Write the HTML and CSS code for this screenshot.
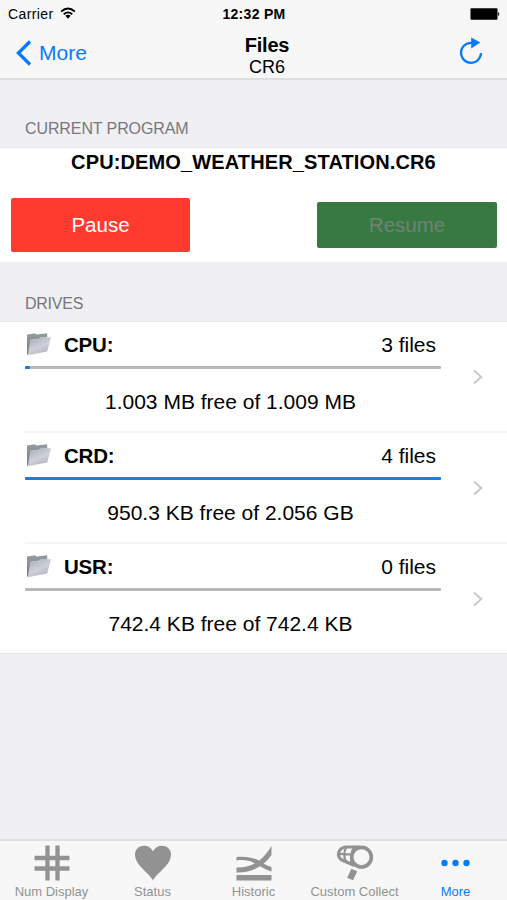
FILE: index.html
```html
<!DOCTYPE html>
<html lang="en">
<head>
<meta charset="utf-8">
<title>Files</title>
<link rel="stylesheet" href="styles.css">
</head>
<body>
<svg width="0" height="0" class="defs" aria-hidden="true">
  <defs>
    <linearGradient id="front" x1="0" y1="0" x2=".6" y2="1"><stop offset="0" stop-color="#a4a9ae"/><stop offset=".6" stop-color="#cdd0d9"/><stop offset="1" stop-color="#b4b7be"/></linearGradient>
    <linearGradient id="back" x1="0" y1="0" x2="0" y2="1"><stop offset="0" stop-color="#979d9e"/><stop offset="1" stop-color="#747a7e"/></linearGradient>
    <symbol id="folder" viewBox="0 0 26 24">
      <path d="M1 2.500 9 1.200l1.200 1.200 11-1.200V7L3 22.500H1z" fill="url(#back)"/>
      <path d="M4.300 8 13 7l1.300-1.300L25 5.200 21.200 19.500 1.800 23.200z" fill="url(#front)"/>
      <path d="M4.300 8 13 7l1.300-1.300L25 5.200" fill="none" stroke="#d2d6da" stroke-width=".6"/>
    </symbol>
    <symbol id="chevron" viewBox="0 0 10 16"><path d="m1 1.500 7.200 6.500L1 14.500" fill="none" stroke="#c7c7cc" stroke-width="2"/></symbol>
  </defs>
</svg>
<div class="app">
  <header>
    <div class="status">
      <div class="carrier"><span>Carrier</span>
        <svg width="16" height="13" viewBox="0 0 16 13"><g fill="none" stroke="#000" stroke-width="1.800"><path d="M1.200 4.500Q8-1.500 14.800 4.500"/><path d="M3.700 7.200Q8 3.500 12.300 7.200"/></g><path d="M5.300 8.800Q8 6.800 10.700 8.800L8 11.700z"/></svg>
      </div>
      <div class="clock">12:32 PM</div>
      <svg class="battery" width="30" height="12" viewBox="0 0 30 12"><rect x=".5" y=".3" width="27" height="11.400" rx="1"/><path d="M28.200 4c1.400.4 1.400 3.600 0 4z"/></svg>
    </div>
    <div class="nav">
      <div class="back"><svg width="16" height="26" viewBox="0 0 16 26"><path d="M14 1.500 2.400 13 14 24.500" fill="none" stroke="#077aff" stroke-width="3.300"/></svg><span>More</span></div>
      <div class="title"><h1>Files</h1><p>CR6</p></div>
      <svg class="refresh" width="24" height="28" viewBox="0 0 24 28"><path d="M13 5.800h-1.200A10 10 0 1 0 22 16" fill="none" stroke="#077aff" stroke-width="2.200"/><path d="M12.200.500 21.300 5.500 12.200 11.500z" fill="#077aff"/></svg>
    </div>
  </header>
  <main>
    <h2 class="section first">CURRENT PROGRAM</h2>
    <section class="program">
      <h3>CPU:DEMO_WEATHER_STATION.CR6</h3>
      <div class="buttons"><button class="pause">Pause</button><button class="resume" disabled>Resume</button></div>
    </section>
    <h2 class="section">DRIVES</h2>
    <section class="drives">
      <article class="drive">
        <div class="info">
          <div class="head"><svg class="folder" width="26" height="24"><use href="#folder"/></svg><strong>CPU:</strong><span class="count">3 files</span></div>
          <div class="bar"><div class="used" style="width:1.2%"></div></div>
          <p class="free">1.003 MB free of 1.009 MB</p>
        </div>
        <svg width="10" height="16"><use href="#chevron"/></svg>
      </article>
      <article class="drive">
        <div class="info">
          <div class="head"><svg class="folder" width="26" height="24"><use href="#folder"/></svg><strong>CRD:</strong><span class="count">4 files</span></div>
          <div class="bar"><div class="used" style="width:100%"></div></div>
          <p class="free">950.3 KB free of 2.056 GB</p>
        </div>
        <svg width="10" height="16"><use href="#chevron"/></svg>
      </article>
      <article class="drive">
        <div class="info">
          <div class="head"><svg class="folder" width="26" height="24"><use href="#folder"/></svg><strong>USR:</strong><span class="count">0 files</span></div>
          <div class="bar"><div class="used" style="width:0%"></div></div>
          <p class="free">742.4 KB free of 742.4 KB</p>
        </div>
        <svg width="10" height="16"><use href="#chevron"/></svg>
      </article>
    </section>
  </main>
  <nav class="tabs">
    <div class="tab"><svg width="38" height="38" viewBox="0 0 38 38"><path d="M14.500 1.500v35M24.500 1.500v35M1.500 14h35M1.500 24.500h35" fill="none" stroke="#929292" stroke-width="4.300"/></svg><span>Num Display</span></div>
    <div class="tab"><svg width="38" height="38" viewBox="0 0 38 38"><path d="M19 36.500C15.500 29 1 21.500 1 10.500 1 .500 15-1.500 19 7.500 23-1.500 37 .500 37 10.500 37 21.500 22.500 29 19 36.500z" fill="#929292"/></svg><span>Status</span></div>
    <div class="tab"><svg width="38" height="38" viewBox="0 0 38 38"><g fill="#929292"><path d="M1.500 31h35v5.500h-35z"/><path d="M1.500 23.500C18 24 28 16 36.500 2v9C29 22 17 29 1.500 28.500z"/><path d="M1.500 13C14 12 22 15 27 18.500c4 2.500 7 3.800 9.500 4.500v4.500C30 25.500 24 21.500 19 19 13 16 8 15.500 1.500 16.500z"/></g></svg><span>Historic</span></div>
    <div class="tab"><svg width="38" height="38" viewBox="0 0 38 38"><g fill="none" stroke="#929292"><circle cx="25.500" cy="13.200" r="9.800" stroke-width="3.600"/><path d="M24 3 9.500 3C1.500 4.500.800 12.500 5.500 15.800L18.500 21.500" stroke-width="3.200"/><path d="M2.500 9.800 15.500 10.500M10.500 3C7.500 8 7.800 13.500 10 17.500" stroke-width="2.200"/><path d="M17.500 4c-3 5-3.300 10-1.500 16" stroke-width="2"/><path d="m18.300 26-4.200 9" stroke-width="6.500"/></g></svg><span>Custom Collect</span></div>
    <div class="tab active"><svg width="38" height="38" viewBox="0 0 38 38"><g fill="#077aff"><circle cx="7.500" cy="19" r="3.200"/><circle cx="18.500" cy="19" r="3.200"/><circle cx="29.500" cy="19" r="3.200"/></g></svg><span>More</span></div>
  </nav>
</div>
</body>
</html>
```
FILE: styles.css
```css
* { box-sizing: border-box; margin: 0; padding: 0; }
body { font-family: "Liberation Sans", Arial, sans-serif; background: #efeff4; color: #000; }
svg { display: block; flex: none; }
.defs { position: absolute; }
.app { height: 900px; display: flex; flex-direction: column; }
header { height: 80px; background: #f7f7f7; border-bottom: 2px solid #dededf; }
.status { height: 28px; display: grid; grid-template-columns: 1fr auto 1fr; align-items: center; padding: 0 7px 0 8px; font-size: 14px; }
.carrier { display: flex; align-items: center; gap: 6px; letter-spacing: .4px; }
.carrier svg { margin-top: -2px; }
.clock { font-weight: bold; font-size: 14px; letter-spacing: .3px; }
.battery { justify-self: end; margin-top: -1px; }
.nav { height: 50px; display: grid; grid-template-columns: 1fr auto 1fr; padding: 0 24px 0 16px; }
.back { display: flex; align-items: center; gap: 7px; height: 49px; color: #077aff; font-size: 21px; }
.title { text-align: center; padding: 6px 0 0 35px; }
h1 { font-size: 20px; line-height: 22px; letter-spacing: -.2px; }
.title p { font-size: 18px; line-height: 22px; }
.refresh { justify-self: end; margin-top: 9px; }
main { flex: 1; }
.section { height: 60px; padding: 32px 25px 0; color: #77777c; font-size: 16px; line-height: 20px; font-weight: normal; letter-spacing: -.25px; border-bottom: 1px solid #e6e6e9; }
.section.first { height: 68px; padding-top: 39px; letter-spacing: -.1px; }
.program { height: 114px; background: #fff; }
h3 { text-align: center; font-size: 20px; line-height: 28px; letter-spacing: .13px; white-space: nowrap; }
.buttons { display: flex; justify-content: space-between; align-items: center; height: 54px; margin: 22px 10px 0 11px; }
button { width: 180px; border: 0; border-radius: 2px; font: 20.500px "Liberation Sans", Arial, sans-serif; }
.pause { width: 179px; height: 54px; background: #ff3b30; color: #fff; }
.resume { height: 46px; background: #367a42; color: #747f76; }
.drives { background: #fff; border-bottom: 1px solid #e6e6e9; }
.drive { height: 111px; display: flex; align-items: center; margin-left: 25px; padding-right: 24px; justify-content: space-between; }
.drive:first-child { height: 109px; }
.drive + .drive { border-top: 2px solid #f5f5f5; }
.info { width: 416px; height: 109px; }
.head { height: 44px; display: flex; align-items: center; font-size: 20.500px; padding-right: 5px; }
.folder { margin-left: 1px; }
.head strong { margin-left: 12px; padding-top: 2px; letter-spacing: -.2px; }
.count { margin-left: auto; padding-top: 2px; font-size: 21px; }
.bar { height: 3px; background: #b7b7b7; border-radius: 1px; }
.used { height: 3px; background: #1a7be5; border-radius: 1px; }
.free { font-size: 21px; line-height: 24px; padding-top: 21px; text-align: center; white-space: nowrap; padding-right: 5px; }
.tabs { height: 61px; background: #f7f7f7; border-top: 2px solid #e0e0e4; display: grid; grid-template-columns: repeat(5, 101px); justify-content: center; }
.tab { display: flex; flex-direction: column; align-items: center; padding-top: 3px; color: #929292; font-size: 13px; }
.tab span { line-height: 15px; margin-top: 2px; white-space: nowrap; }
.tab.active { color: #077aff; }
```
